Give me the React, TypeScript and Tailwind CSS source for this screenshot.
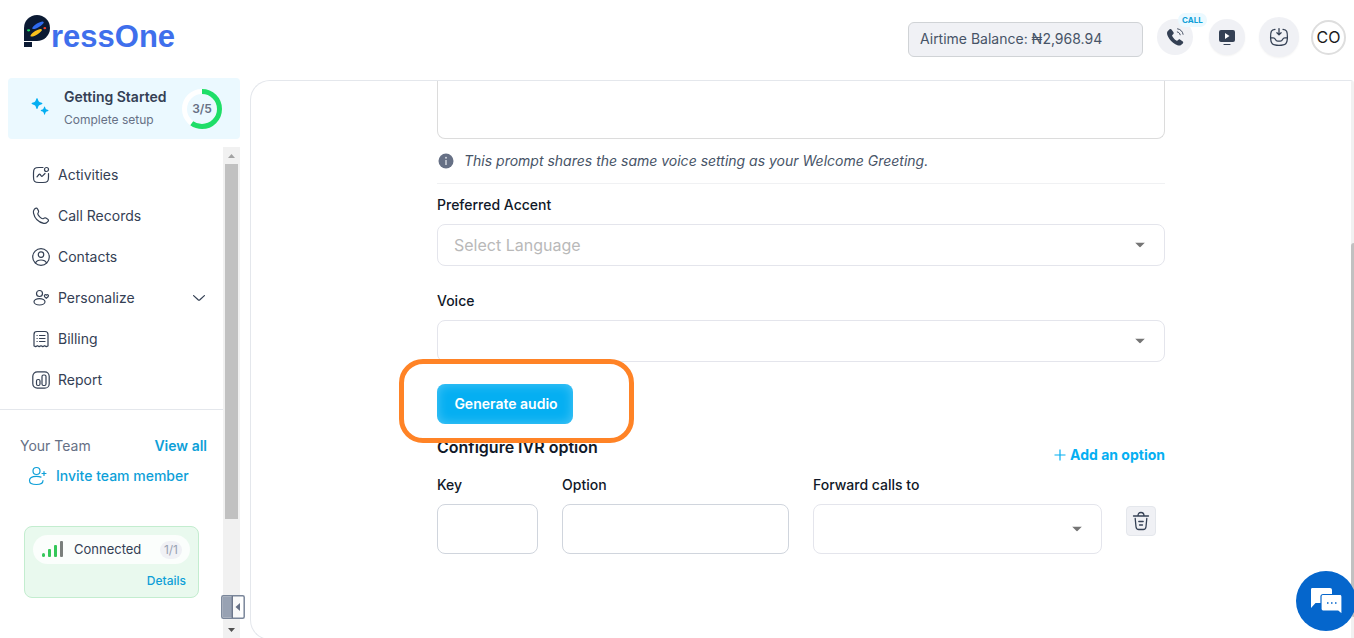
import type { ReactNode } from "react";

const FONT = "font-['Inter','Noto_Sans',sans-serif]";

function Logo() {
  return (
    <a href="#home" aria-label="PressOne" className="flex items-end">
      <svg width="27" height="33" viewBox="0 0 27 33" aria-hidden="true">
        <path d="M0 26V13A13 13 0 0 1 13 0a13 13 0 0 1 0 26z" fill="#0b1a33" />
        <rect y="27" width="8" height="5" fill="#0b1a33" />
        <ellipse cx="14" cy="10.3" rx="6.6" ry="2" transform="rotate(-31 14 10.3)" fill="#2f6bf0" />
        <ellipse cx="12.2" cy="17.8" rx="6.6" ry="2" transform="rotate(-31 12.2 17.8)" fill="#fbc21c" />
        <ellipse cx="4.6" cy="15.3" rx="1.6" ry="1.1" fill="#22dd66" />
        <ellipse cx="20.8" cy="13.2" rx="1.4" ry="1.1" fill="#f0412c" />
      </svg>
      <span className="font-['Liberation_Sans',sans-serif] text-[31px] leading-[22px] font-bold text-[#3f6fec]">
        ressOne
      </span>
    </a>
  );
}

function Header() {
  return (
    <header className="flex h-[78px] shrink-0 items-start justify-between pl-6 pr-2">
      <div className="pt-[15px]">
        <Logo />
      </div>
      <div className="flex h-[74px] items-center">
        <div className="mr-3.5 mt-[5px] flex h-[35px] w-[235px] items-center rounded-md border border-[#d0d3d6] bg-[#f0f1f5] px-[11px] pb-0.5 text-sm text-[#475467]">
          Airtime Balance: ₦2,968.94
        </div>
        <button
          aria-label="Call"
          className="relative mr-4 flex size-9 items-center justify-center rounded-full bg-[#f0f1f5]"
        >
          <svg width="20" height="20" viewBox="0 0 20 20" fill="none">
            <path
              d="M4.4 2.5 2.6 4.2c-.9 1-.8 3 .5 5.6 1.500 2.900 4.200 5.800 7.200 7.500 2.500 1.400 4.600 1.600 5.700.7l1.800-1.600c.6-.6.6-1.300 0-1.800l-2.500-1.900c-.6-.5-1.300-.4-1.800 0l-1 .9c-.4.3-.8.3-1.200 0-1.700-1.200-3.200-2.800-4.100-4.600-.2-.4-.1-.8.2-1.100l1-1c.4-.5.5-1.100.1-1.700L6.500 2.600c-.5-.7-1.400-.8-2.100-.1z"
              fill="#344054"
            />
            <path d="M12.300 4.900c1.500.3 2.600 1.400 2.900 2.900M12.500 1.800c3 .4 5.200 2.600 5.600 5.500" stroke="#344054" strokeWidth=".9" strokeLinecap="round" />
          </svg>
          <span className="absolute -top-1.5 left-[21px] rounded-full bg-[#ebf9ff] px-1 text-[8px] leading-[14px] font-bold text-[#0e9fd8]">
            CALL
          </span>
        </button>
        <button
          aria-label="Watch tutorials"
          className="mr-3.5 flex size-9 items-center justify-center rounded-full bg-[#f0f1f5] shadow-xs"
        >
          <svg width="18" height="18" viewBox="0 0 18 18">
            <rect x="1" y="2" width="16" height="12" rx="2" fill="#344054" />
            <path d="m7 5 4.500 3L7 11z" fill="#fff" />
            <path d="M6 16.500h6" stroke="#344054" strokeWidth="1.200" strokeLinecap="round" />
          </svg>
        </button>
        <button
          aria-label="Inbox"
          className="mr-3 flex size-10 items-center justify-center rounded-full bg-[#f0f1f5] shadow-xs"
        >
          <svg width="20" height="20" viewBox="0 0 20 20" fill="none" stroke="#344054" strokeWidth="1.300" strokeLinecap="round" strokeLinejoin="round">
            <path d="M6 2.300C2.200 2.700 1.600 4.600 1.600 10c0 6.700 1.700 8.300 8.400 8.300s8.400-1.600 8.400-8.300c0-5.400-.6-7.300-4.400-7.700" />
            <path d="M1.600 10.800h2.600c1 0 1.600.4 2.100 1.400.6 1.300 1.200 2 2.400 2h2.600c1.200 0 1.800-.7 2.400-2 .5-1 1.100-1.400 2.100-1.400h2.600" />
            <path d="M10 1.600v6M7.900 5.800 10 7.900l2.100-2.100" />
          </svg>
        </button>
        <button
          aria-label="Account"
          className="flex size-[35px] items-center justify-center rounded-full border-2 border-[#dedede] bg-white text-base text-[#1b1b1b]"
        >
          CO
        </button>
      </div>
    </header>
  );
}

function GettingStarted() {
  return (
    <a href="#setup" className="ml-2 flex h-[61px] shrink-0 items-center rounded-sm bg-[#ebf9ff] pl-[22px] pr-[18px]">
      <svg className="mb-1" width="20" height="20" viewBox="0 0 20 20" fill="#05aff2" aria-hidden="true">
        <path d="M7 .9c.8 0 .9 2.400 1.900 3.500s3.600 1.200 3.600 2-2.600 1-3.600 2S7.800 12 7 12s-.9-2.600-1.900-3.600-3.600-1.200-3.600-2 2.600-.9 3.600-2S6.200.9 7 .9z" />
        <path d="M14.600 9.500c.6 0 .6 1.800 1.300 2.500s2.600.8 2.600 1.500-1.900.8-2.600 1.500-.7 2.700-1.300 2.700-.7-2-1.400-2.700-2.500-.8-2.500-1.500 1.800-.8 2.500-1.500.8-2.500 1.400-2.500z" />
      </svg>
      <div className="ml-3.5 flex-1">
        <p className="text-sm leading-[22px] font-semibold text-[#344054]">Getting Started</p>
        <p className="text-xs leading-6 text-[#667085]">Complete setup</p>
      </div>
      <div className="relative flex size-10 items-center justify-center rounded-full">
        <svg className="absolute inset-0 -rotate-90" viewBox="0 0 40 40" fill="none" aria-hidden="true">
          <circle cx="20" cy="20" r="17.500" stroke="#fff" strokeWidth="5" />
          <circle cx="20" cy="20" r="17.500" stroke="#1fde68" strokeWidth="5" pathLength="100" strokeDasharray="60 100" />
        </svg>
        <span className="relative text-xs font-semibold text-[#667085]">3/5</span>
      </div>
    </a>
  );
}

const menu: { label: string; icon: ReactNode }[] = [
  {
    label: "Activities",
    icon: (
      <>
        <path d="M11 1.500H7C2.500 1.500 1.500 2.500 1.500 7v4c0 4.500 1 5.500 5.500 5.500h4c4.500 0 5.500-1 5.500-5.500V7.500" />
        <circle cx="14.500" cy="3.500" r="2" />
        <path d="m5 10.800 1.900-2.300c.5-.6 1-.5 1.400.1l.9 1.300c.4.6.9.600 1.400 0L13 7.500" />
      </>
    ),
  },
  {
    label: "Call Records",
    icon: (
      <path d="M2.300 2.400 3.200 1.500c.7-.6 1.700-.5 2.200.3l1 1.800c.4.700.2 1.600-.3 2.200-.7.800-.3 2 1.600 4s3.200 2.300 4 1.600c.6-.5 1.500-.7 2.200-.3l1.900 1.100c.8.5.9 1.500.2 2.200l-1 1c-.8.900-2 1.200-3.300.9C6.700 15.200 2.600 11.100 1.500 6.100c-.3-1.400 0-2.800.8-3.700z" />
    ),
  },
  {
    label: "Contacts",
    icon: (
      <>
        <circle cx="9" cy="9" r="8.300" />
        <rect x="6.300" y="3.900" width="5.400" height="5.400" rx="2.500" />
        <path d="M3.500 14.900c.9-2 2.900-2.900 5.500-2.900s4.600.9 5.500 2.900" />
      </>
    ),
  },
  {
    label: "Personalize",
    icon: (
      <>
        <circle cx="7.500" cy="4.500" r="3" />
        <ellipse cx="7.500" cy="12.800" rx="5.500" ry="3.200" />
        <path d="M14.300 9.300c-1.300-.9-2-1.600-2-2.500 0-1.200 1.300-1.500 2-.6.700-.9 2.200-.6 2.200.6 0 .9-.9 1.600-2.200 2.500z" />
      </>
    ),
  },
  {
    label: "Billing",
    icon: (
      <>
        <path d="M2 16V4.500C2 2.300 2.800 1.500 5 1.500h8c2.200 0 3 .8 3 3V16l-1.700.6-1.700-.9-1.800.9-1.800-.9-1.800.9-1.800-.9-1.700.9z" />
        <path d="M7.500 5.500h5.500M7.500 8.500h5.500M7.500 11.500h5.500M5 5.500h.2M5 8.500h.2M5 11.500h.2" />
      </>
    ),
  },
  {
    label: "Report",
    icon: (
      <>
        <rect x=".8" y=".8" width="16.400" height="16.400" rx="4.500" />
        <rect x="4.500" y="8.500" width="3.500" height="6" rx="1.500" />
        <rect x="10" y="4" width="4" height="10.500" rx="1.500" />
      </>
    ),
  },
];

function Sidebar() {
  return (
    <aside className="relative flex w-60 shrink-0 flex-col">
      <GettingStarted />
      <div className="mt-2 flex min-h-0 flex-1">
        <div className="min-w-0 flex-1">
          <nav aria-label="Main" className="border-b border-[#e4e7ec] pt-[7px] pb-[9px]">
            {menu.map((item) => (
              <a
                key={item.label}
                href={"#" + item.label.toLowerCase().replace(" ", "-")}
                className="flex h-[41px] items-center pl-8 pr-[18px] text-sm text-[#344054]"
              >
                <svg className="mr-2 shrink-0" width="18" height="18" viewBox="0 0 18 18" fill="none" stroke="#344054" strokeWidth="1.200" strokeLinecap="round" strokeLinejoin="round" aria-hidden="true">
                  {item.icon}
                </svg>
                <span className="flex-1">{item.label}</span>
                {item.label === "Personalize" && (
                  <svg width="12" height="6" viewBox="0 0 12 6" fill="none" stroke="#344054" strokeWidth="1.200" strokeLinecap="round" strokeLinejoin="round" aria-hidden="true">
                    <path d="m.6.600 4.500 4.200c.6.500 1.200.5 1.800 0L11.400.6" />
                  </svg>
                )}
              </a>
            ))}
          </nav>
          <div className="flex justify-between pt-[26px] pl-5 pr-4 text-sm leading-5">
            <span className="text-[#667085]">Your Team</span>
            <a href="#team" className="font-semibold text-[#0e9fd8]">View all</a>
          </div>
          <button className="mt-2 ml-7 flex h-6 items-center gap-2 text-sm font-medium text-[#0e9fd8]">
            <svg width="20" height="20" viewBox="0 0 20 20" fill="none" stroke="#0e9fd8" strokeWidth="1.200" strokeLinecap="round" aria-hidden="true">
              <circle cx="8.500" cy="5" r="3.500" />
              <path d="M15 14.500c0 2.500-1.500 4-6.500 4s-7-1.300-7-4 2.500-4.200 7-4.200c1.800 0 3.400.3 4.500.8" />
              <path d="M14 7.500h4M16 5.500v4" />
            </svg>
            Invite team member
          </button>
          <section
            aria-label="Connection status"
            className="mt-[38px] mr-6 ml-6 flex h-[72px] flex-col items-end rounded-lg border border-[#c3edcf] bg-[#e9f9ee] px-2 pt-2"
          >
            <div className="flex h-[29px] w-full shrink-0 items-center rounded-full bg-white/80 pl-[9px] pr-2">
              <svg width="21" height="17" viewBox="0 0 21 17" fill="#34c759" aria-hidden="true">
                <rect x="0" y="12" width="3" height="4" rx="1.500" />
                <rect x="6" y="8" width="3" height="8" rx="1" />
                <rect x="12" y="4" width="3" height="12" rx="1" />
                <rect x="18" y="0" width="3" height="16" rx="1" fill="#7a7f7c" />
              </svg>
              <span className="ml-[11px] flex-1 text-[13px] text-[#344054]">Connected</span>
              <span className="rounded-full bg-[#f0f1f5] px-1 text-xs leading-[18px] text-[#98a2b3]">1/1</span>
            </div>
            <a href="#connection" className="mt-[7px] mr-1 text-xs leading-5 font-medium text-[#0e9fd8]">Details</a>
          </section>
        </div>
        <div aria-hidden="true" className="flex w-[17px] flex-col items-center bg-[#f1f1f1]">
          <span className="flex h-[17px] items-center">
            <svg width="7" height="4" viewBox="0 0 7 4"><path d="M0 4 3.500 0 7 4z" fill="#a3a3a3" /></svg>
          </span>
          <div className="w-[13px] flex-7 bg-[#c1c1c1]" />
          <div className="flex-2" />
          <span className="flex h-[17px] items-center">
            <svg width="7" height="4" viewBox="0 0 7 4"><path d="M0 0 3.500 4 7 0z" fill="#505050" /></svg>
          </span>
        </div>
      </div>
      <button aria-label="Collapse sidebar" className="absolute -right-[5px] bottom-[19px]">
        <svg width="24" height="24" viewBox="0 0 24 24">
          <rect x=".8" y=".8" width="22.400" height="22.400" rx="1.500" fill="#fff" fillOpacity=".5" stroke="#7a869a" strokeWidth="1.500" />
          <path d="M1.500 1.500H11v21H1.500z" fill="#98a2b3" />
          <path d="M11.300 1v22" stroke="#667085" strokeWidth="1.300" />
          <path d="m19 8-4.500 4 4.500 4z" fill="#667085" />
        </svg>
      </button>
    </aside>
  );
}

function SelectBox({ id, placeholder, className }: { id: string; placeholder?: string; className: string }) {
  return (
    <div className="relative">
      <select
        id={id}
        defaultValue=""
        className={
          "block w-full appearance-none rounded-lg border border-[#e4e5ec] bg-white pl-4 pr-10 text-base text-[#b9b9b9] " + className
        }
      >
        <option value="">{placeholder}</option>
      </select>
      <svg
        className="pointer-events-none absolute top-1/2 right-5 -translate-y-1/2"
        width="10"
        height="5"
        viewBox="0 0 10 5"
        aria-hidden="true"
      >
        <path d="M0 0h10L5 5z" fill="#757575" />
      </svg>
    </div>
  );
}

function PromptForm() {
  const label = "block text-sm leading-5 font-medium text-[#101828]";
  return (
    <form className="mx-auto w-full max-w-[728px]">
      <textarea
        aria-label="Prompt message"
        className="block h-[58px] w-full resize-none rounded-b-lg border border-t-0 border-[#dcdcdc] p-4"
      />
      <p className="flex h-[45px] items-center gap-2.5 border-b border-[#f0f1f3] text-sm text-[#475467] italic">
        <svg className="ml-px" width="16" height="16" viewBox="0 0 16 16" aria-hidden="true">
          <circle cx="8" cy="8" r="7.500" fill="#667085" />
          <path d="M8 7v5" stroke="#d0d5dd" strokeWidth="1.500" />
          <circle cx="8" cy="4.700" r="1" fill="#d0d5dd" />
        </svg>
        This prompt shares the same voice setting as your Welcome Greeting.
      </p>

      <label htmlFor="accent" className={label + " mt-[11px] mb-[9px]"}>Preferred Accent</label>
      <SelectBox id="accent" placeholder="Select Language" className="h-[42px]" />
      <label htmlFor="voice" className={label + " mt-[25px] mb-[9px]"}>Voice</label>
      <SelectBox id="voice" className="h-[42px]" />

      <div className="relative mt-[22px] w-fit">
        <button
          type="button"
          className="block h-10 w-[136px] rounded-lg bg-[#05aff2] pl-0.5 text-sm font-semibold text-white shadow-[inset_0_0_12px_rgba(255,255,255,0.3)]"
        >
          Generate audio
        </button>
        <div className="pointer-events-none absolute -top-[25px] -left-[38px] h-[84px] w-[235px] rounded-3xl border-5 border-[#ff8326]" />
      </div>

      <div className="mt-[11px] flex items-start justify-between">
        <h2 className="text-base leading-6 font-semibold text-[#101828]">Configure IVR option</h2>
        <button type="button" className="mt-2.5 flex items-center gap-1 text-sm leading-5 font-bold text-[#05aff2]">
          <svg width="12" height="12" viewBox="0 0 12 12" stroke="#05aff2" strokeWidth="1.200" aria-hidden="true">
            <path d="M6 .5v11M.5 6h11" />
          </svg>
          Add an option
        </button>
      </div>

      <div className="mt-2.5 grid grid-cols-[101fr_227fr_289fr_39fr] gap-x-6">
        <div>
          <label htmlFor="key" className={label + " mb-[9px]"}>Key</label>
          <input id="key" className="block h-[50px] w-full rounded-lg border border-[#d0d5dd] px-3" />
        </div>
        <div>
          <label htmlFor="option" className={label + " mb-[9px]"}>Option</label>
          <input id="option" className="block h-[50px] w-full rounded-lg border border-[#d0d5dd] px-3" />
        </div>
        <div>
          <label htmlFor="forward" className={label + " mb-[9px]"}>Forward calls to</label>
          <SelectBox id="forward" className="h-[50px]" />
        </div>
        <button
          type="button"
          aria-label="Delete option"
          className="mt-[31px] flex size-[30px] items-center justify-center rounded-sm border border-[#e4e7ec] bg-[#f0f1f5]"
        >
          <svg width="18" height="20" viewBox="0 0 18 20" fill="none" stroke="#344054" strokeWidth="1.300" strokeLinecap="round" strokeLinejoin="round">
            <path d="M1.500 5h15M6 4.800C6 2.700 6.800 1.500 9 1.500s3 1.200 3 3.300" />
            <path d="M3.200 7.500 4 15.700c.2 2 .9 2.800 2.800 2.800h4.400c1.900 0 2.600-.8 2.800-2.800l.8-8.200" />
            <path d="M6.800 10.500h4.400M7.500 14h3" />
          </svg>
        </button>
      </div>
    </form>
  );
}

export default function App() {
  return (
    <div className={"relative flex h-screen flex-col overflow-hidden bg-white " + FONT}>
      <Header />
      <div className="flex min-h-0 flex-1">
        <Sidebar />
        <main className="mt-0.5 -mb-0.5 ml-2.5 flex min-w-0 flex-1 overflow-hidden rounded-l-[20px] rounded-tr-sm border border-r-0 border-[#e4e7ec]">
          <div className="min-w-0 flex-1">
            <PromptForm />
          </div>
          <div aria-hidden="true" className="flex w-[3px] flex-col bg-[#f1f1f1]">
            <div className="h-[29%]" />
            <div className="h-[67%] rounded-l-sm bg-[#c1c1c1]" />
          </div>
        </main>
      </div>
      <button
        aria-label="Open chat"
        className="absolute -right-0.5 bottom-[7px] flex size-[60px] items-center justify-center rounded-full bg-[#0566cc] pl-0.5"
      >
        <svg width="34" height="30" viewBox="0 0 34 30">
          <path d="M2 2h18a2 2 0 0 1 2 2v13H5.500L1 22V3.500A1.500 1.500 0 0 1 2 2z" fill="#fff" />
          <path
            d="M13 8.500h17a2 2 0 0 1 2 2V28.500L28 25H13a2 2 0 0 1-2-2V10.500a2 2 0 0 1 2-2z"
            fill="#fff"
            stroke="#0566cc"
            strokeWidth="1.200"
          />
          <path d="M17 17h1.500M21 17h1.500M25 17h1.500" stroke="#0566cc" strokeWidth="1.500" />
        </svg>
      </button>
    </div>
  );
}
